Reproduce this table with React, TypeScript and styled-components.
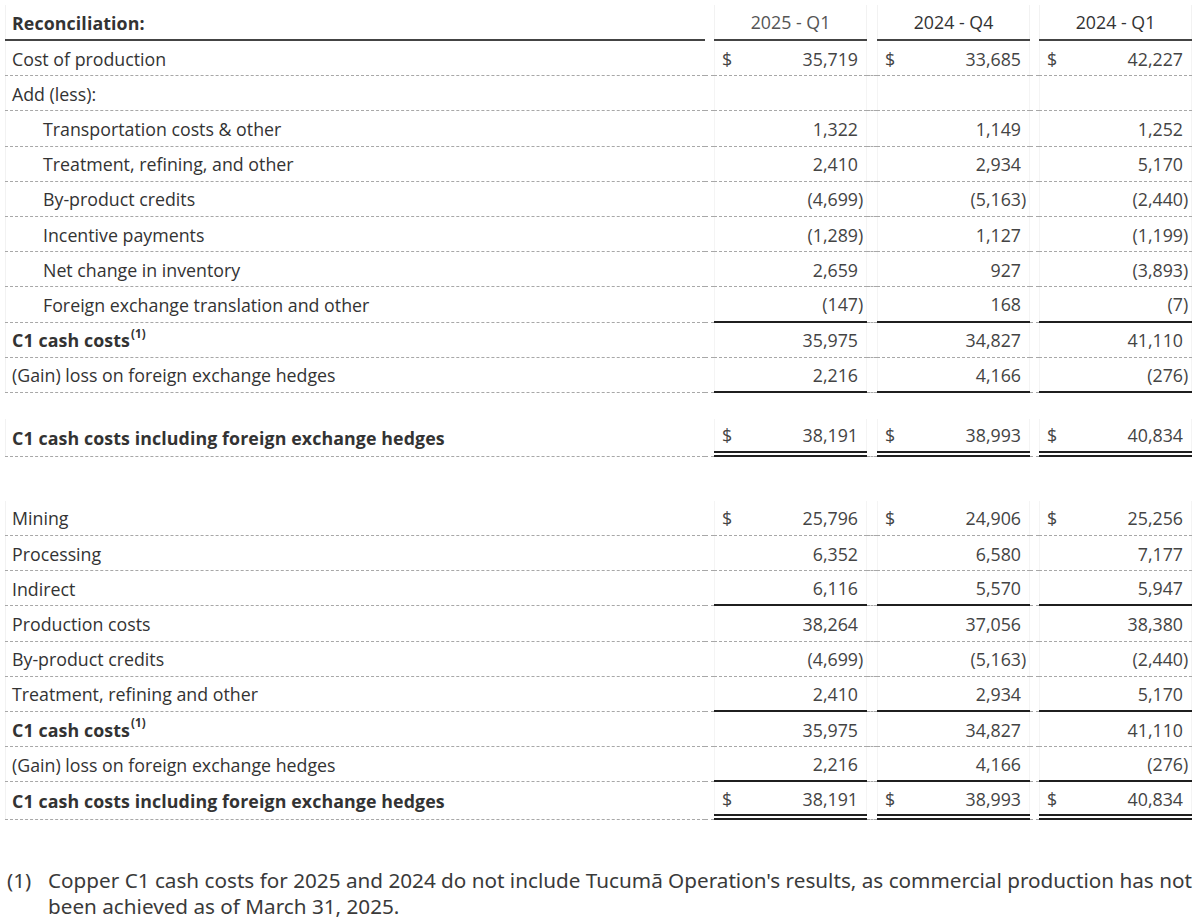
import React from "react";
import styled, { createGlobalStyle, css } from "styled-components";

const GlobalStyle = createGlobalStyle`
  html, body { margin: 0; padding: 0; background: #ffffff; }
  body { font-family: "Open Sans", Lato, sans-serif; color: #333333; }
  * { box-sizing: border-box; }
`;

type Line = "dashed" | "solid" | "double" | "header" | "none";

const lineCss = (line: Line) => {
  switch (line) {
    case "dashed":
      return css`border-bottom: 1px dashed #a8a8a8;`;
    case "solid":
      return css`border-bottom: 2px solid #1f1f1f;`;
    case "double":
      return css`border-bottom: 6px double #1f1f1f;`;
    case "header":
      return css`border-bottom: 2px solid #444444;`;
    default:
      return css`border-bottom: none;`;
  }
};

const Page = styled.div`
  width: 1200px;
  padding: 5px 8px 20px 5px;
`;

const Table = styled.div`
  display: flex;
  flex-direction: column;
  width: 1187px;
`;

const Row = styled.div<{ $h: number }>`
  display: grid;
  grid-template-columns: 700px 9px 153px 10px 153px 9px 153px;
  height: ${(p) => p.$h}px;
`;

const Spacer = styled.div<{ $h: number }>`
  height: ${(p) => p.$h}px;
`;

const LabelCell = styled.div<{ $line: Line; $indent?: boolean; $bold?: boolean }>`
  display: flex;
  align-items: center;
  padding-left: ${(p) => (p.$indent ? 38 : 7)}px;
  padding-top: 1px;
  font-size: 17.8px;
  font-weight: ${(p) => (p.$bold ? 700 : 400)};
  letter-spacing: ${(p) => (p.$bold ? "0.1px" : "0")};
  color: #333333;
  white-space: nowrap;
  box-shadow: inset 1px 0 #f2f2f2;
  ${(p) => lineCss(p.$line)}
`;

const GapCell = styled.div<{ $line: Line }>`
  ${(p) => lineCss(p.$line)}
`;

const HeadCell = styled.div<{ $muted?: boolean }>`
  display: flex;
  align-items: center;
  justify-content: center;
  font-size: 17.8px;
  color: ${(p) => (p.$muted ? "#555555" : "#333333")};
  border-bottom: 2px solid #444444;
  box-shadow: inset 1px 0 #f2f2f2, inset -1px 0 #f2f2f2;
`;

const ValueCell = styled.div<{ $line: Line }>`
  display: flex;
  align-items: center;
  padding: 1px 2px 0 8px;
  font-size: 17.8px;
  color: #444444;
  box-shadow: inset 1px 0 #f4f4f4, inset -1px 0 #f4f4f4;
  ${(p) => lineCss(p.$line)}
`;

const Dollar = styled.span`
  flex: 0 0 auto;
`;

const Amount = styled.span`
  flex: 1 1 auto;
  text-align: right;
  white-space: nowrap;
`;

const Paren = styled.span<{ $show: boolean }>`
  display: inline-block;
  width: 7px;
  text-align: left;
  visibility: ${(p) => (p.$show ? "visible" : "hidden")};
`;

const Sup = styled.span`
  position: relative;
  top: -7px;
  font-size: 11.5px;
  font-weight: 700;
  margin-left: 1px;
`;

const Footnote = styled.div`
  display: flex;
  margin-top: 47px;
  padding-left: 2px;
  font-family: "Noto Sans", Roboto, sans-serif;
  font-size: 20.7px;
  line-height: 26px;
  color: #3a3a3a;
`;

const NoteMark = styled.span`
  flex: 0 0 41px;
`;

const NoteText = styled.div`
  display: flex;
  flex-direction: column;
  white-space: nowrap;
`;

type RowData = {
  label: React.ReactNode;
  values?: string[];
  dollar?: boolean;
  indent?: boolean;
  bold?: boolean;
  valueLine?: Line;
  h?: number;
};

const ROW_H = 35.2;

const c1 = (
  <>
    C1 cash costs<Sup>(1)</Sup>
  </>
);

const rows: (RowData | { spacer: number })[] = [
  { label: "Cost of production", values: ["35,719", "33,685", "42,227"], dollar: true },
  { label: "Add (less):" },
  { label: "Transportation costs & other", values: ["1,322", "1,149", "1,252"], indent: true },
  { label: "Treatment, refining, and other", values: ["2,410", "2,934", "5,170"], indent: true },
  { label: "By-product credits", values: ["(4,699)", "(5,163)", "(2,440)"], indent: true },
  { label: "Incentive payments", values: ["(1,289)", "1,127", "(1,199)"], indent: true },
  { label: "Net change in inventory", values: ["2,659", "927", "(3,893)"], indent: true },
  {
    label: "Foreign exchange translation and other",
    values: ["(147)", "168", "(7)"],
    indent: true,
    valueLine: "solid",
  },
  { label: c1, values: ["35,975", "34,827", "41,110"], bold: true },
  {
    label: "(Gain) loss on foreign exchange hedges",
    values: ["2,216", "4,166", "(276)"],
    valueLine: "solid",
  },
  { spacer: 26 },
  {
    label: "C1 cash costs including foreign exchange hedges",
    values: ["38,191", "38,993", "40,834"],
    dollar: true,
    bold: true,
    valueLine: "double",
    h: 38,
  },
  { spacer: 44 },
  { label: "Mining", values: ["25,796", "24,906", "25,256"], dollar: true },
  { label: "Processing", values: ["6,352", "6,580", "7,177"] },
  { label: "Indirect", values: ["6,116", "5,570", "5,947"], valueLine: "solid" },
  { label: "Production costs", values: ["38,264", "37,056", "38,380"] },
  { label: "By-product credits", values: ["(4,699)", "(5,163)", "(2,440)"] },
  { label: "Treatment, refining and other", values: ["2,410", "2,934", "5,170"], valueLine: "solid" },
  { label: c1, values: ["35,975", "34,827", "41,110"], bold: true },
  {
    label: "(Gain) loss on foreign exchange hedges",
    values: ["2,216", "4,166", "(276)"],
    valueLine: "solid",
  },
  {
    label: "C1 cash costs including foreign exchange hedges",
    values: ["38,191", "38,993", "40,834"],
    dollar: true,
    bold: true,
    valueLine: "double",
    h: 38,
  },
];

const Value: React.FC<{ v?: string; dollar?: boolean; line: Line }> = ({ v, dollar, line }) => {
  const neg = !!v && v.startsWith("(");
  const body = v ? (neg ? v.slice(0, -1) : v) : "";
  return (
    <ValueCell $line={line}>
      {dollar && <Dollar>$</Dollar>}
      <Amount>{body}</Amount>
      <Paren $show={neg}>)</Paren>
    </ValueCell>
  );
};

const DataRow: React.FC<{ r: RowData }> = ({ r }) => {
  const vl = r.valueLine ?? "dashed";
  const vals = r.values ?? ["", "", ""];
  return (
    <Row $h={r.h ?? ROW_H}>
      <LabelCell $line="dashed" $indent={r.indent} $bold={r.bold}>
        {r.label}
      </LabelCell>
      <GapCell $line="dashed" />
      <Value v={vals[0]} dollar={r.dollar} line={vl} />
      <GapCell $line="dashed" />
      <Value v={vals[1]} dollar={r.dollar} line={vl} />
      <GapCell $line="dashed" />
      <Value v={vals[2]} dollar={r.dollar} line={vl} />
    </Row>
  );
};

export default function App() {
  return (
    <>
      <GlobalStyle />
      <Page>
        <Table>
          <Row $h={36}>
            <LabelCell $line="header" $bold>
              Reconciliation:
            </LabelCell>
            <GapCell $line="none" />
            <HeadCell $muted>2025 - Q1</HeadCell>
            <GapCell $line="none" />
            <HeadCell>2024 - Q4</HeadCell>
            <GapCell $line="none" />
            <HeadCell>2024 - Q1</HeadCell>
          </Row>
          {rows.map((r, i) =>
            "spacer" in r ? <Spacer key={i} $h={r.spacer} /> : <DataRow key={i} r={r} />
          )}
        </Table>
        <Footnote>
          <NoteMark>(1)</NoteMark>
          <NoteText>
            <span>
              Copper C1 cash costs for 2025 and 2024 do not include Tucumã Operation's results, as commercial
              production has not
            </span>
            <span>been achieved as of March 31, 2025.</span>
          </NoteText>
        </Footnote>
      </Page>
    </>
  );
}
